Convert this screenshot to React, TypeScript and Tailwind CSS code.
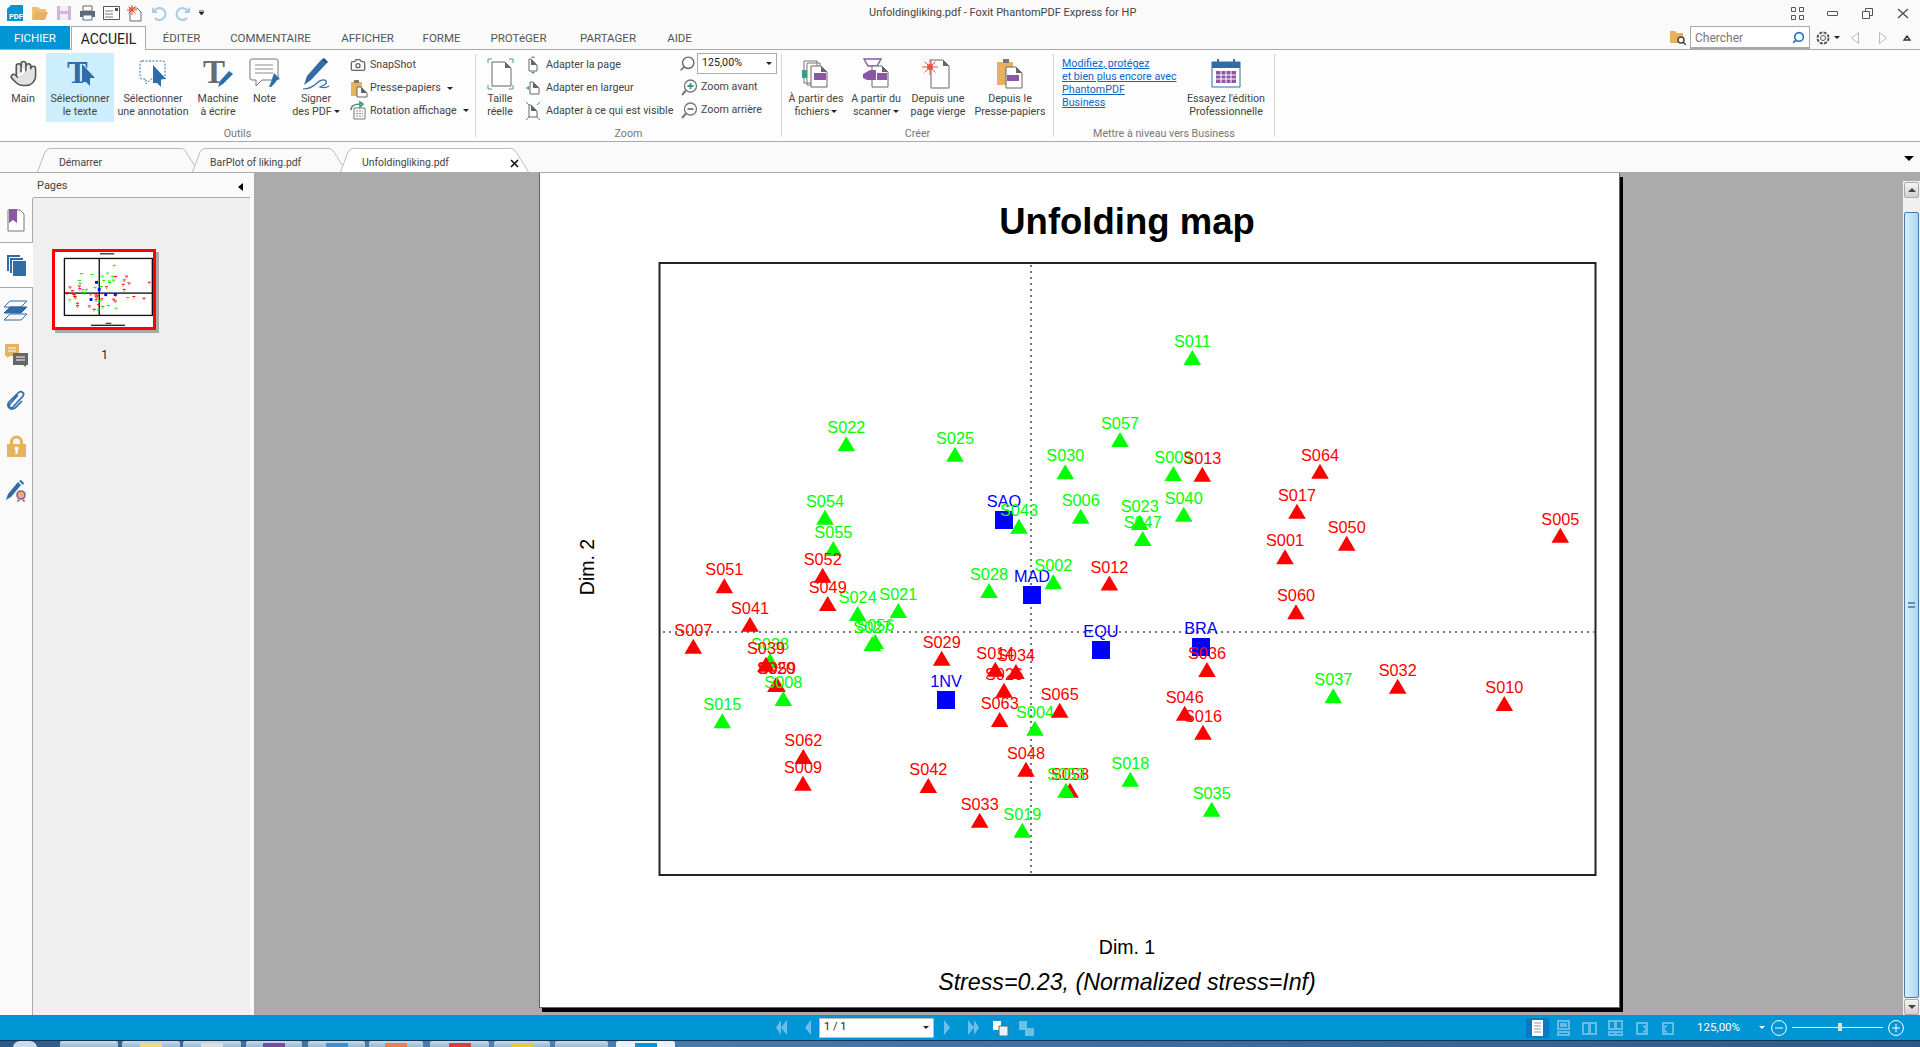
import React from "react";
import { Camera, Hand, Search } from "lucide-react";

type Point = { id: string; x: number; b: number; c: string };

const BLUE = "#2f6ca8";
const PURPLE = "#8a57a5";
const ORANGE = "#e8b15f";
const GREEN = "#00ff00";
const RED = "#ff0000";

const squares = [
  { id: "SAO", x: 1004, y: 520 },
  { id: "MAD", x: 1032, y: 595 },
  { id: "EQU", x: 1101, y: 650 },
  { id: "BRA", x: 1201, y: 647 },
  { id: "1NV", x: 946, y: 700 },
];

const g = (id: string, x: number, b: number): Point => ({ id, x, b, c: GREEN });
const r = (id: string, x: number, b: number): Point => ({ id, x, b, c: RED });

// drawing order matters, labels overlap in the plot
const points: Point[] = [
  g("S011", 1192.3, 365),
  g("S022", 846.3, 451.3),
  g("S025", 955, 461.7),
  g("S057", 1120, 447),
  g("S030", 1065.3, 479.3),
  g("S003", 1173.3, 481),
  g("S054", 825, 524.7),
  g("S055", 833.3, 556),
  g("S043", 1019, 533.7),
  g("S006", 1080.7, 523.7),
  g("S047", 1142.7, 546),
  g("S023", 1139.7, 530),
  g("S040", 1183.7, 521.7),
  g("S028", 989, 598),
  g("S002", 1053.3, 589.3),
  g("S024", 857.7, 621),
  g("S021", 898.3, 618),
  g("S056", 875.3, 649),
  g("S027", 872.3, 651),
  g("S038", 770, 668),
  g("S037", 1333.3, 703.3),
  g("S015", 722.3, 728.3),
  g("S018", 1130.3, 786.7),
  g("S035", 1211.7, 816.7),
  g("S019", 1022.3, 837.7),
  r("S013", 1202.3, 481.7),
  r("S064", 1320, 478.7),
  r("S017", 1297, 518.7),
  r("S050", 1346.7, 550.7),
  r("S001", 1285, 564.3),
  r("S005", 1560.3, 542.7),
  r("S012", 1109.4, 590.5),
  r("S060", 1296, 619.3),
  r("S052", 822.7, 582.7),
  r("S051", 724.3, 593.3),
  r("S049", 827.7, 611),
  r("S041", 750, 631.7),
  r("S007", 693.3, 653.7),
  r("S039", 766, 671.7),
  r("S020", 776, 692),
  r("S059", 777, 692),
  g("S008", 783.3, 706),
  r("S029", 941.7, 665.7),
  r("S014", 995.3, 676.7),
  r("S026", 1004, 697.7),
  r("S034", 1016, 679),
  r("S063", 999.7, 727),
  r("S065", 1059.7, 717.7),
  g("S004", 1035, 735.7),
  r("S036", 1207, 677),
  r("S016", 1203, 739.7),
  r("S046", 1184.7, 720.7),
  r("S032", 1397.7, 693.7),
  r("S010", 1504.3, 711),
  r("S062", 803.3, 764),
  r("S009", 803, 790.7),
  r("S042", 928.3, 793),
  r("S048", 1026, 776.7),
  r("S058", 1070, 797.7),
  g("S053", 1066, 797.7),
  r("S033", 979.7, 827.7),
];

const Caret = ({ className = "" }: { className?: string }) => (
  <span className={`inline-block h-0 w-0 border-x-[3px] border-t-[3px] border-x-transparent border-t-[#222] ${className}`} />
);

const Doc = ({ x, y, w, h, fill = "#fff" }: { x: number; y: number; w: number; h: number; fill?: string }) => (
  <g>
    <path d={`M${x} ${y}h${w - 6}l6 6v${h - 6}h${-w}z`} fill={fill} stroke="#666" strokeWidth="1" />
    <path d={`M${x + w - 6} ${y}l6 6h-6z`} fill="#666" />
  </g>
);

const Cursor = ({ x, y }: { x: number; y: number }) => (
  <path d={`M${x} ${y}l13 14h-5l0 8-4-4h-4z`} fill={BLUE} />
);

const Ico = ({ s = 32, w, children }: { s?: number; w?: number; children: React.ReactNode }) => (
  <svg width={w ?? s} height={s} viewBox={`0 0 ${w ?? s} ${s}`} className="shrink-0 overflow-visible">
    {children}
  </svg>
);

const TextSelectIcon = () => (
  <Ico>
    <text x="3" y="25" fontFamily="Liberation Serif" fontWeight="700" fontSize="31" fill={BLUE}>T</text>
    <Cursor x={18} y={6} />
  </Ico>
);
const AnnotIcon = () => (
  <Ico>
    <path d="M5 3h21a2 2 0 0 1 2 2v16h-14l-5 5v-5h-4a2 2 0 0 1-2-2v-14a2 2 0 0 1 2-2z" fill="#fff" stroke={BLUE} strokeDasharray="2 1.5" />
    <Cursor x={16} y={7} />
  </Ico>
);
const TypewriterIcon = () => (
  <Ico>
    <text x="1" y="25" fontFamily="Liberation Serif" fontWeight="700" fontSize="33" fill="#6b6b6b">T</text>
    <path d="M16 29l2-6 9-10 4 3-10 10z" fill={BLUE} />
  </Ico>
);
const NoteIcon = () => (
  <Ico>
    <path d="M3 1h24a2 2 0 0 1 2 2v17a2 2 0 0 1-2 2h-14l-6 6v-6h-4a2 2 0 0 1-2-2v-17a2 2 0 0 1 2-2z" fill="#fff" stroke="#777" />
    <path d="M6 7h18M6 11h18M6 15h18" stroke="#888" />
    <path d="M25 15l6 6-3 1-2 3-4 4-2 0 2-5 1-3z" fill={BLUE} />
  </Ico>
);
const SignIcon = () => (
  <Ico s={34}>
    <path d="M5 28l3-9 14-16 5 4-15 16z" fill={BLUE} />
    <path d="M22 3l3-2 4 4-2 2z" fill="#1e4f80" />
    <path d="M4 32c6 0 10-2 14-6 3-3 7-4 9-2 2 3-4 5-6 6 3 1 6 1 9-1" fill="none" stroke={BLUE} strokeWidth="1.2" />
  </Ico>
);
const ClipboardIcon = () => (
  <Ico s={18}>
    <path d="M1 3h11v14H1z" fill={ORANGE} />
    <path d="M4 1h5v3H4z" fill="#777" />
    <Doc x={7} y={8} w={10} h={10} />
  </Ico>
);
const RotateIcon = () => (
  <Ico s={18}>
    <path d="M4 6h11v11H4z" fill="#fff" stroke="#777" />
    <path d="M6 9h7M6 11.5h7M6 14h7" stroke="#888" strokeDasharray="2 1" />
    <path d="M1 8c0-4 4-6 9-6M10 0l3 2-3 3z" fill="none" stroke="#3b9a7a" strokeWidth="1.6" />
  </Ico>
);
const Corners = ({ w, h }: { w: number; h: number }) => (
  <path d={`M1 5V1h4M${w - 5} 1h4v4M1 ${h - 5}v4h4M${w - 5} ${h - 1}h4v-4`} fill="none" stroke="#4b9c86" />
);
const ActualSizeIcon = () => (
  <Ico s={32} w={27}>
    <Corners w={27} h={32} />
    <Doc x={5} y={4} w={19} h={24} />
  </Ico>
);
const FitPageIcon = () => (
  <Ico s={18} w={14}>
    <Doc x={3} y={3} w={8} h={12} />
    <path d="M7 0l-2 2h4zM7 18l-2-2h4z" fill="#4b9c86" />
  </Ico>
);
const FitWidthIcon = () => (
  <Ico s={18} w={14}>
    <Doc x={4} y={3} w={9} h={12} />
    <path d="M0 9l3-2v4z" fill="#4b9c86" />
  </Ico>
);
const FitVisibleIcon = () => (
  <Ico s={18} w={14}>
    <Doc x={3} y={3} w={8} h={12} />
    <path d="M0 0l3 3M14 0l-3 3M0 18l3-3M14 18l-3-3" stroke="#4b9c86" />
  </Ico>
);
const ZoomSign = ({ plus }: { plus?: boolean }) => (
  <svg width="17" height="17" viewBox="0 0 17 17" className="mr-[3px] shrink-0" fill="none">
    <circle cx="9.500" cy="7" r="6" stroke="#777" strokeWidth="1.300" fill="#fff" />
    <path d="M5 11.500l-4 4.500" stroke="#777" strokeWidth="2" />
    <path d={plus ? "M6.500 7h6M9.500 4v6" : "M6.500 7h6"} stroke={plus ? "#3b9a7a" : "#777"} strokeWidth="1.800" />
  </svg>
);
const FromFilesIcon = () => (
  <Ico>
    <path d="M4 3h13v22H4zM7 5h13v22H7z" fill="#fff" stroke="#777" />
    <Doc x={11} y={8} w={16} h={21} />
    <path d="M2 12h5v8H2z" fill="#3b9a8a" />
    <path d="M14 15h12v7H14z" fill={PURPLE} />
  </Ico>
);
const ScannerIcon = () => (
  <Ico>
    <path d="M4 1h17l-4 7h-9z" fill="none" stroke={PURPLE} strokeWidth="1.4" />
    <Doc x={12} y={8} w={16} h={21} />
    <path d="M3 16l7-4h6v10h-9l-4-2z" fill={PURPLE} />
    <path d="M17 15h10v7H17z" fill={PURPLE} />
  </Ico>
);
const BlankIcon = () => (
  <Ico>
    <Doc x={9} y={2} w={18} h={28} />
    <circle cx="8" cy="9" r="3" fill="#e8563a" />
    <path d="M8 1v16M0 9h16M2.500 3.500l11 11M13.500 3.500l-11 11" stroke="#e8563a" />
  </Ico>
);
const PasteIcon = () => (
  <Ico>
    <path d="M3 4h16v23H3z" fill={ORANGE} />
    <path d="M9 1h6v4H9z" fill="#777" />
    <Doc x={12} y={9} w={16} h={21} />
    <path d="M13 17h12v6H13z" fill={PURPLE} />
  </Ico>
);
const CalendarIcon = () => (
  <Ico>
    <path d="M2 4h28v25H2z" fill="#fff" stroke={BLUE} />
    <path d="M2 4h28v6H2z" fill={BLUE} />
    <path d="M8 1v6M24 1v6" stroke={BLUE} strokeWidth="2" />
    <path d="M6 13h20v12H6z" fill={PURPLE} />
    <path d="M11 13v12M16 13v12M21 13v12M6 17h20M6 21h20" stroke="#fff" />
  </Ico>
);

const BigButton = ({
  w, icon, lines, active, caret, iconH = 35,
}: { w: number; icon: React.ReactNode; lines: string[]; active?: boolean; caret?: boolean; iconH?: number }) => (
  <div style={{ width: w }} className={`flex h-[69px] shrink-0 flex-col items-center pt-[3px] ${active ? "bg-[#cdeefd]" : ""}`}>
    <div style={{ height: iconH }} className="flex items-center justify-center">{icon}</div>
    <div className="mt-[1px] text-center leading-[13px] whitespace-nowrap">
      <div>{lines[0]}</div>
      <div className="flex items-center justify-center gap-[2px]">
        {lines[1]}
        {caret && <Caret />}
      </div>
    </div>
  </div>
);

const SmallRow = ({ icon, label, caret }: { icon: React.ReactNode; label: string; caret?: boolean }) => (
  <div className="flex h-[23px] items-center whitespace-nowrap">
    <div className="flex w-[20px] shrink-0 items-center">{icon}</div>
    {label}
    {caret && <Caret className="ml-[6px]" />}
  </div>
);

const Group = ({ w, label, children }: { w: number; label: string; children: React.ReactNode }) => (
  <div style={{ width: w }} className="flex shrink-0 flex-col">
    <div className="flex h-[69px]">{children}</div>
    <div className="mt-[4px] h-[14px] text-center leading-[15px] text-[#777]">{label}</div>
  </div>
);

const Sep = () => <div className="mt-[1px] h-[83px] w-px shrink-0 bg-[#d4d4d4]" />;

const QuickAccess = () => (
  <div className="flex w-[869px] shrink-0 items-center pl-[6px]">
    <svg width="18" height="18" viewBox="0 0 18 18" className="mr-[7px]">
      <path d="M5 1h12v16H1V5z" fill="#0096d6" />
      <text x="3" y="15" fontSize="7.500" fontWeight="700" fill="#fff" fontFamily="Roboto">PDF</text>
    </svg>
    <svg width="18" height="16" viewBox="0 0 18 16" className="mr-[7px]">
      <path d="M1 2h6l2 2h6v3H4l-3 8z" fill="#f0c070" />
      <path d="M4 7h13l-3 8H1z" fill={ORANGE} />
    </svg>
    <svg width="16" height="16" viewBox="0 0 16 16" className="mr-[7px]">
      <path d="M1 1h14v14H1z" fill="#cdb8dc" />
      <path d="M4 1h8v5H4zM4 9h8v6H4z" fill="#f3eef6" />
    </svg>
    <svg width="17" height="16" viewBox="0 0 17 16" className="mr-[7px]">
      <path d="M4 1h9v5H4z" fill="#fff" stroke="#666" />
      <path d="M1 6h15v6H1z" fill="#667" />
      <path d="M4 10h9v5H4z" fill="#fff" stroke="#3a78a8" />
    </svg>
    <svg width="17" height="14" viewBox="0 0 17 14" className="mr-[7px]">
      <path d="M.5.500h16v13H.5z" fill="#fff" stroke="#555" />
      <path d="M2 5h8M2 8h8M2 11h8" stroke="#777" />
      <path d="M12 2h3v3h-3z" fill="#555" />
    </svg>
    <svg width="15" height="17" viewBox="0 0 15 17" className="mr-[9px]">
      <path d="M3 3h7l4 4v9H3z" fill="#fff" stroke="#666" />
      <path d="M5 0v10M0 5h10M1.500 1.500l7 7M8.500 1.500l-7 7" stroke="#e8452c" />
    </svg>
    <svg width="16" height="16" viewBox="0 0 16 16" className="mr-[8px]">
      <path d="M4 5a6 6 0 1 1 0 8" fill="none" stroke="#a8cbe6" strokeWidth="2" />
      <path d="M1 2v6h6z" fill="#a8cbe6" />
    </svg>
    <svg width="16" height="16" viewBox="0 0 16 16" className="mr-[8px]">
      <path d="M12 5a6 6 0 1 0 0 8" fill="none" stroke="#a8cbe6" strokeWidth="2" />
      <path d="M15 2v6H9z" fill="#a8cbe6" />
    </svg>
    <svg width="5" height="6" viewBox="0 0 5 6">
      <path d="M0 0h5M0 2l2.500 3L5 2z" stroke="#222" strokeWidth=".8" fill="#222" />
    </svg>
  </div>
);

const WindowButtons = () => (
  <div className="ml-auto flex items-center">
    <svg width="13" height="13" viewBox="0 0 13 13" className="mr-[23px]" fill="none" stroke="#555">
      <path d="M.5.500h4v4h-4zM8.500.500h4v4h-4zM.5 8.500h4v4h-4zM8.500 8.500h4v4h-4z" />
    </svg>
    <div className="mr-[24px] h-[5px] w-[11px] rounded-[1px] border border-[#555]" />
    <svg width="11" height="11" viewBox="0 0 11 11" className="mr-[24px]" fill="#fafafa" stroke="#555">
      <path d="M3.500.500h7v7h-7z" />
      <path d="M.5 3.500h7v7h-7z" />
    </svg>
    <svg width="12" height="11" viewBox="0 0 12 11" className="mr-[11px]" fill="none" stroke="#555" strokeWidth="1.500">
      <path d="M1 1l10 9M11 1L1 10" />
    </svg>
  </div>
);

const menuTabs = [
  { label: "ÉDITER", w: 71 },
  { label: "COMMENTAIRE", w: 107 },
  { label: "AFFICHER", w: 87 },
  { label: "FORME", w: 61 },
  { label: "PROTéGER", w: 93 },
  { label: "PARTAGER", w: 86 },
  { label: "AIDE", w: 57 },
];

const MenuRow = () => (
  <div className="flex h-[24px] shrink-0 border-b border-[#aaa] text-[11.500px] text-[#555]">
    <div className="flex h-[23px] w-[70px] items-center justify-center bg-[#0096d6] pt-[2px] text-[#fff]">FICHIER</div>
    <div className="z-10 ml-px flex h-[24px] w-[75px] items-center justify-center border-x border-t border-[#aaa] bg-[#fdfdfd] pt-[2px] text-[14px] text-[#222]">ACCUEIL</div>
    {menuTabs.map((t) => (
      <div key={t.label} style={{ width: t.w }} className="flex h-[23px] items-center justify-center pt-[2px]">{t.label}</div>
    ))}
    <div className="ml-auto flex h-[23px] items-center">
      <svg width="16" height="15" viewBox="0 0 16 15" className="mr-[4px]">
        <path d="M0 1h5l2 2h6v10H0z" fill={ORANGE} />
        <circle cx="11" cy="10" r="3" fill="#fff" stroke="#444" strokeWidth="1.500" />
        <path d="M13 12l3 3" stroke="#444" strokeWidth="1.500" />
      </svg>
      <div className="flex h-[23px] w-[120px] items-center justify-between border-x border-t border-b-2 border-[#aaa] bg-white px-[4px] pt-[1px] text-[12px] text-[#777]">
        Chercher
        <Search size={13} strokeWidth={3} color="#2670b8" className="-scale-x-100" />
      </div>
      <svg width="14" height="14" viewBox="0 0 14 14" className="mr-[4px] ml-[6px]" fill="none" stroke="#555">
        <circle cx="7" cy="7" r="2.500" />
        <circle cx="7" cy="7" r="5.500" strokeDasharray="3 1.300" strokeWidth="2" />
      </svg>
      <Caret className="mr-[11px]" />
      <svg width="8" height="12" viewBox="0 0 8 12" className="mr-[20px]" fill="none" stroke="#bbb"><path d="M7.500.500v11L.5 6z" /></svg>
      <svg width="8" height="12" viewBox="0 0 8 12" className="mr-[16px]" fill="none" stroke="#bbb"><path d="M.5.500v11L7.500 6z" /></svg>
      <svg width="8" height="6" viewBox="0 0 8 6" className="mr-[9px]" fill="none" stroke="#333" strokeWidth="1.300"><path d="M1 5h6L4 1z" /></svg>
    </div>
  </div>
);

const Ribbon = () => (
  <div className="flex h-[92px] shrink-0 border-b border-[#aaa] bg-[#fdfdfd] pt-[3px] text-[10.700px] text-[#444]">
    <Group w={475} label="Outils">
      <BigButton w={46} icon={<Hand size={29} color="#555" fill="#e2e2e2" strokeWidth={1.300} />} lines={["Main", ""]} />
      <BigButton w={68} active icon={<TextSelectIcon />} lines={["Sélectionner", "le texte"]} />
      <BigButton w={78} icon={<AnnotIcon />} lines={["Sélectionner", "une annotation"]} />
      <BigButton w={52} icon={<TypewriterIcon />} lines={["Machine", "à écrire"]} />
      <BigButton w={41} icon={<NoteIcon />} lines={["Note", ""]} />
      <BigButton w={62} icon={<SignIcon />} lines={["Signer", "des PDF"]} caret />
      <div className="ml-[3px] flex flex-col pt-[1px]">
        <SmallRow icon={<Camera size={16} color="#666" />} label="SnapShot" />
        <SmallRow icon={<ClipboardIcon />} label="Presse-papiers" caret />
        <SmallRow icon={<RotateIcon />} label="Rotation affichage" caret />
      </div>
    </Group>
    <Sep />
    <Group w={305} label="Zoom">
      <BigButton w={48} icon={<ActualSizeIcon />} lines={["Taille", "réelle"]} />
      <div className="flex w-[155px] shrink-0 flex-col pt-[1px] pl-[2px]">
        <SmallRow icon={<FitPageIcon />} label="Adapter la page" />
        <SmallRow icon={<FitWidthIcon />} label="Adapter en largeur" />
        <SmallRow icon={<FitVisibleIcon />} label="Adapter à ce qui est visible" />
      </div>
      <div className="flex flex-col">
        <div className="flex h-[21px] items-center">
          <Search size={17} color="#666" className="mr-px -scale-x-100" />
          <div className="flex h-[21px] w-[80px] items-center justify-between border border-[#aaa] bg-white px-[4px] text-[#222]">
            125,00%
            <Caret />
          </div>
        </div>
        <div className="mt-[2px] flex h-[23px] items-center pl-[2px]">
          <ZoomSign plus />Zoom avant
        </div>
        <div className="flex h-[23px] items-center pl-[2px]">
          <ZoomSign />Zoom arrière
        </div>
      </div>
    </Group>
    <Sep />
    <Group w={271} label="Créer">
      <div className="w-[4px]" />
      <BigButton w={60} icon={<FromFilesIcon />} lines={["À partir des", "fichiers"]} caret />
      <BigButton w={60} icon={<ScannerIcon />} lines={["A partir du", "scanner"]} caret />
      <BigButton w={64} icon={<BlankIcon />} lines={["Depuis une", "page vierge"]} />
      <BigButton w={80} icon={<PasteIcon />} lines={["Depuis le", "Presse-papiers"]} />
    </Group>
    <Sep />
    <Group w={220} label="Mettre à niveau vers Business">
      <div className="w-[130px] shrink-0 pt-[4px] pl-[8px] leading-[13px] whitespace-nowrap text-[#0a66cc] underline">
        <div>Modifiez, protégez</div>
        <div>et bien plus encore avec</div>
        <div>PhantomPDF</div>
        <div>Business</div>
      </div>
      <BigButton w={84} icon={<CalendarIcon />} lines={["Essayez l'édition", "Professionnelle"]} />
    </Group>
    <Sep />
  </div>
);

const Tab = ({ w, pl, label, active }: { w: number; pl: number; label: string; active?: boolean }) => (
  <div style={{ width: w, paddingLeft: pl }} className="relative -mr-[7px] flex h-[24px] items-center pt-[5px] text-[10.400px] text-[#444]">
    <svg width={w} height="24" viewBox={`0 0 ${w} 24`} className="absolute top-0 left-0">
      <path d={`M.5 24L8 4q2-3.500 5-3.500H${w - 18}q3 0 5 3.500L${w - .5} 24`} fill={active ? "#fff" : "#fafafa"} stroke="#bbb" />
    </svg>
    <span className="relative">{label}</span>
    {active && (
      <svg width="9" height="9" viewBox="0 0 9 9" className="absolute top-[11px] right-[10px]" stroke="#111" strokeWidth="1.600">
        <path d="M1 1l7 7M8 1L1 8" />
      </svg>
    )}
  </div>
);

const TabBar = () => (
  <div className="flex h-[31px] shrink-0 items-end border-b border-[#aaa] bg-[#fafafa] pl-[37px]">
    <Tab w={162} pl={22} label="Démarrer" />
    <Tab w={155} pl={18} label="BarPlot of liking.pdf" />
    <Tab w={189} pl={22} label="Unfoldingliking.pdf" active />
    <span className="mb-[11px] ml-auto mr-[6px] h-0 w-0 border-x-[5px] border-t-[5px] border-x-transparent border-t-black" />
  </div>
);

const railIcons: React.ReactNode[] = [
  <svg key="b" width="18" height="23" viewBox="0 0 18 23">
    <path d="M1 1h12l4 4v17H1z" fill="#fff" stroke="#777" />
    <path d="M2 0h8v14l-4-3-4 3z" fill={PURPLE} />
  </svg>,
  <svg key="p" width="19" height="21" viewBox="0 0 19 21">
    <path d="M0 0h13v2H2v14H0zM3 3h13v2H5v13H3z" fill={BLUE} />
    <path d="M6 6h13v15H6z" fill={BLUE} />
  </svg>,
  <svg key="l" width="24" height="21" viewBox="0 0 24 21" fill="none" stroke={BLUE}>
    <path d="M6 1h17l-6 6H0z" />
    <path d="M6 7h17l-6 6H0z" fill={BLUE} />
    <path d="M6 14h17l-6 6H0z" />
  </svg>,
  <svg key="c" width="23" height="23" viewBox="0 0 23 23">
    <path d="M0 0h14v12H5l-3 2v-2H0z" fill={ORANGE} />
    <path d="M3 4h8M3 7h8" stroke="#fff" />
    <path d="M8 9h15v12h-2v2l-3-2H8z" fill="#666" />
    <path d="M11 13h9M11 16h9" stroke="#fff" />
  </svg>,
  <svg key="a" width="20" height="21" viewBox="0 0 20 21" fill="none" stroke={BLUE} strokeWidth="1.700">
    <path d="M12 5l-8 9c-2 3 1 5 3 3l10-11c2-3-2-6-5-3L3 12c-3 4 1 9 6 6l7-7" />
  </svg>,
  <svg key="k" width="19" height="22" viewBox="0 0 19 22">
    <path d="M3 10V7a6.500 6.500 0 0 1 13 0v3h-3V7a3.500 3.500 0 0 0-7 0v3z" fill={ORANGE} />
    <path d="M0 9h19v13H0z" fill={ORANGE} />
    <path d="M8.500 13h2v6h-2z" fill="#fff" />
    <circle cx="9.500" cy="13.500" r="2" fill="#fff" />
  </svg>,
  <svg key="s" width="21" height="22" viewBox="0 0 21 22">
    <path d="M0 20l2-6 10-12 3 3-10 12z" fill={BLUE} />
    <path d="M13 1l2-1 3 3-1 2z" fill={BLUE} />
    <circle cx="15" cy="15" r="4" fill={ORANGE} stroke={PURPLE} strokeWidth="1.600" />
    <path d="M12 19l-1 3 3-1M18 19l1 3-3-1" fill={PURPLE} />
  </svg>,
];

const Rail = () => (
  <div className="flex w-[33px] shrink-0 flex-col border-r border-[#aaa] bg-[#fafafa]">
    {railIcons.map((icon, i) => (
      <div
        key={i}
        className={
          i === 1
            ? "z-10 -mr-px -mt-px flex h-[46px] items-center justify-center border-y border-[#aaa] bg-white"
            : "flex h-[45px] items-center justify-center"
        }
      >
        {icon}
      </div>
    ))}
  </div>
);

const Thumbnail = () => (
  <div className="mt-[51px] ml-[19px] h-[81px] w-[104px] border-[3px] border-[#ff0000] bg-white shadow-[3px_3px_0_#aaa]">
    <svg width="98" height="75" viewBox="568 200 1030 790">
      <rect x="1040" y="212" width="150" height="14" fill="#333" />
      <rect x="666" y="268" width="926" height="600" fill="none" stroke="#111" strokeWidth="14" />
      <rect x="666" y="626" width="926" height="14" fill="#111" />
      <rect x="1026" y="268" width="14" height="600" fill="#111" />
      {points.map((p) => (
        <g key={p.id} fill={p.c}>
          <rect x={p.x - 16} y={p.b - 30} width="32" height="11" />
          <rect x={p.x - 7} y={p.b - 13} width="14" height="11" opacity=".6" />
        </g>
      ))}
      {squares.map((s) => (
        <rect key={s.id} x={s.x - 15} y={s.y - 15} width="30" height="30" fill="#0000ff" />
      ))}
      <rect x="1100" y="945" width="60" height="12" fill="#333" />
      <rect x="945" y="965" width="360" height="14" fill="#222" />
    </svg>
  </div>
);

const Sidebar = () => (
  <div className="flex w-[254px] shrink-0 flex-col border-r-[4px] border-[#fafafa] bg-[#fafafa]">
    <div className="ml-[33px] flex h-[25px] shrink-0 items-center justify-between border-b border-[#aaa] pt-[3px] pr-[7px] pl-[4px] text-[11px] text-[#444]">
      Pages
      <span className="h-0 w-0 border-y-[4px] border-r-[5px] border-y-transparent border-r-black" />
    </div>
    <div className="flex flex-1">
      <Rail />
      <div className="flex-1 bg-[#efefef]">
        <Thumbnail />
        <div className="mt-[19px] pr-[74px] text-center text-[12px] leading-[13px] text-[#222]">1</div>
      </div>
    </div>
  </div>
);

const PdfPage = () => (
  <div className="ml-[285px] h-[835px] w-[1081px] shrink-0 border-x border-b border-[#666] bg-white shadow-[3px_4px_0_#000]">
    <svg width="1079" height="834" viewBox="540 173 1079 834" fontFamily="Liberation Sans">
      <text x="1127" y="234" textAnchor="middle" fontSize="36.500" fontWeight="700" fill="#000">Unfolding map</text>
      <text x="0" y="0" textAnchor="middle" fontSize="19.500" fill="#000" transform="translate(594 567) rotate(-90)">Dim. 2</text>
      <text x="1127" y="954" textAnchor="middle" fontSize="19.500" fill="#000">Dim. 1</text>
      <text x="1127" y="990" textAnchor="middle" fontSize="23.200" fontStyle="italic" fill="#000">Stress=0.23, (Normalized stress=Inf)</text>
      <rect x="659.500" y="263" width="936" height="612" fill="none" stroke="#222" strokeWidth="2" />
      <path d="M663 632H1594" stroke="#777" strokeWidth="2" strokeDasharray="2 4" />
      <path d="M1031 265V873" stroke="#777" strokeWidth="2" strokeDasharray="2 4" />
      {squares.map((s) => (
        <g key={s.id} fill="#0000ff">
          <rect x={s.x - 9} y={s.y - 9} width="18" height="18" />
          <text x={s.x} y={s.y - 12.700} textAnchor="middle" fontSize="16.300">{s.id}</text>
        </g>
      ))}
      {points.map((p) => (
        <g key={p.id} fill={p.c}>
          <path d={`M${p.x - 8.800} ${p.b}H${p.x + 8.800}L${p.x} ${p.b - 15}z`} />
          <text x={p.x} y={p.b - 18} textAnchor="middle" fontSize="16.300">{p.id}</text>
        </g>
      ))}
    </svg>
  </div>
);

const Scrollbar = () => (
  <div className="mt-[8px] flex w-[17px] shrink-0 flex-col bg-[#f0f0f0] px-[1px] pt-[1px]">
    <div className="flex h-[16px] items-center justify-center rounded-[2px] border border-[#aaa] bg-[linear-gradient(#f5f5f5,#cfcfcf)]">
      <span className="h-0 w-0 border-x-[4px] border-b-[4px] border-x-transparent border-b-[#444]" />
    </div>
    <div className="mt-[14px] flex h-[786px] items-center justify-center rounded-[2px] border border-[#4a7ba6] bg-[linear-gradient(90deg,#d9eefb,#a9d6f3)]">
      <div className="h-[6px] w-[7px] border-y-2 border-[#5d8fb8]" />
    </div>
    <div className="mt-[1px] flex h-[16px] items-center justify-center rounded-[2px] border border-[#aaa] bg-[linear-gradient(#f5f5f5,#cfcfcf)]">
      <span className="h-0 w-0 border-x-[4px] border-t-[4px] border-x-transparent border-t-[#444]" />
    </div>
  </div>
);

const NavTri = ({ dir, bar }: { dir: "l" | "r"; bar?: boolean }) => (
  <svg width="11" height="15" viewBox="0 0 11 15" fill="#6cc0e8">
    {dir === "l" ? (
      <>
        {bar && <path d="M5 0v15L0 7.500z" />}
        <path d="M11 0v15L5 7.500z" />
      </>
    ) : (
      <>
        <path d="M0 0v15l6-7.500z" />
        {bar && <path d="M6 0v15l5-7.500z" />}
      </>
    )}
  </svg>
);

const ViewIcon = ({ d, active }: { d: string; active?: boolean }) => (
  <div className={`flex h-[20px] w-[23px] items-center justify-center ${active ? "bg-[#0a78c2]" : ""}`}>
    <svg width="15" height="16" viewBox="0 0 15 16">
      {active && <path d="M2 0h11v16H2z" fill="#fff" />}
      <path d={d} fill="none" stroke={active ? "#999" : "#66bce6"} strokeWidth={active ? 1 : 2} />
    </svg>
  </div>
);

const StatusBar = () => (
  <div className="flex h-[25px] shrink-0 items-center bg-[#0096d6] text-[12px] text-white">
    <div className="ml-[776px] flex w-[43px] items-center justify-between pr-[8px]">
      <NavTri dir="l" bar />
      <NavTri dir="l" />
    </div>
    <div className="flex h-[20px] w-[115px] items-center justify-between border border-[#bbb] bg-white px-[4px] text-[11px] text-[#222]">
      1 / 1
      <Caret />
    </div>
    <div className="ml-[10px] flex w-[35px] items-center justify-between">
      <NavTri dir="r" />
      <NavTri dir="r" bar />
    </div>
    <svg width="16" height="16" viewBox="0 0 16 16" className="ml-[14px]">
      <path d="M0 1h8v9H0z" fill="#fff" />
      <path d="M6 6h9v10H6z" fill="#e8f4fb" stroke="#666" />
    </svg>
    <svg width="16" height="16" viewBox="0 0 16 16" className="ml-[10px]" fill="#6cc0e8">
      <path d="M0 1h8v9H0zM6 8h9v8H6z" />
    </svg>
    <div className="ml-[491px] flex items-center gap-[3px]">
      <ViewIcon active d="M4 3h7M4 6h7M4 9h7M4 12h7" />
      <ViewIcon d="M2 1h11v8H2zM2 12h11v3H2zM4 4h7M4 6h7" />
      <ViewIcon d="M1 3h6v11H1zM8 3h6v11H8z" />
      <ViewIcon d="M1 1h6v8H1zM8 1h6v8H8zM1 12h6v3H1zM8 12h6v3H8z" />
      <ViewIcon d="M3 3h10v11H3zM9 6a3 3 0 0 1 0 6" />
      <ViewIcon d="M3 3h10v11H3zM7 6a3 3 0 0 0 0 6" />
    </div>
    <span className="ml-[18px] w-[62px] text-[11.500px]">125,00%</span>
    <span className="h-0 w-0 border-x-[3px] border-t-[3px] border-x-transparent border-t-white" />
    <svg width="16" height="16" viewBox="0 0 16 16" className="ml-[6px]" fill="none" stroke="#fff"><circle cx="8" cy="8" r="7.400" /><path d="M4 8h8" /></svg>
    <div className="relative ml-[5px] h-px w-[91px] bg-white">
      <div className="absolute top-[-4px] left-[46px] h-[8px] w-[4px] bg-[#ddd]" />
    </div>
    <svg width="16" height="16" viewBox="0 0 16 16" className="ml-[5px]" fill="none" stroke="#fff"><circle cx="8" cy="8" r="7.400" /><path d="M4 8h8M8 4v8" /></svg>
  </div>
);

const taskButtons = [
  { ml: 13, w: 58, c: "" },
  { ml: 4, w: 58, c: "#f5d77a" },
  { ml: 3, w: 58, c: "#ddd" },
  { ml: 5, w: 56, c: "#7a4aa0" },
  { ml: 6, w: 57, c: "#3f8fd0" },
  { ml: 4, w: 54, c: "#e8824a" },
  { ml: 7, w: 59, c: "#d9403a" },
  { ml: 5, w: 56, c: "#e8c83a" },
  { ml: 5, w: 53, c: "" },
];

const TaskBar = () => (
  <div className="flex h-[7px] shrink-0 border-t border-[#15324f] bg-[linear-gradient(90deg,#2c5a88,#4a80b0_25%,#3a6ea5_60%,#2c5a88)]">
    <div className="ml-[13px] h-[7px] w-[24px] rounded-t-full bg-[#c9dcea]" />
    {taskButtons.map((b, i) => (
      <div key={i} style={{ width: b.w, marginLeft: i === 0 ? 23 : b.ml }} className="flex h-[7px] justify-center rounded-t-[2px] bg-[linear-gradient(#c6dcec,#8fb3d0)] pt-[2px]">
        {b.c && <div style={{ backgroundColor: b.c }} className="h-[5px] w-[22px]" />}
      </div>
    ))}
    <div className="ml-[8px] flex h-[7px] w-[59px] justify-center rounded-t-[2px] bg-[#e8f2f8] pt-[2px]">
      <div className="h-[5px] w-[22px] bg-[#0096d6]" />
    </div>
  </div>
);

export default function App() {
  return (
    <div className="flex h-[1047px] w-[1920px] flex-col overflow-hidden bg-[#fafafa] [font-family:Roboto,sans-serif]">
      <div className="flex h-[26px] shrink-0 items-center">
        <QuickAccess />
        <span className="pt-[1px] text-[11px] text-[#444]">Unfoldingliking.pdf - Foxit PhantomPDF Express for HP</span>
        <WindowButtons />
      </div>
      <MenuRow />
      <Ribbon />
      <TabBar />
      <div className="flex h-[842px] shrink-0">
        <Sidebar />
        <div className="flex flex-1 justify-between bg-[#ababab]">
          <PdfPage />
          <Scrollbar />
        </div>
      </div>
      <StatusBar />
      <TaskBar />
    </div>
  );
}
